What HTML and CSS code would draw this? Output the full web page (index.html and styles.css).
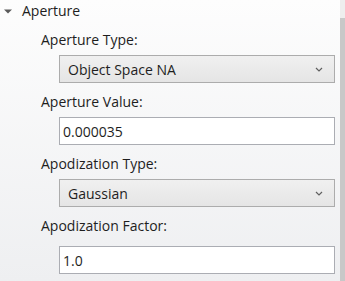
FILE: index.html
```html
<!DOCTYPE html>
<html lang="en">

<head>
    <meta charset="utf-8">
    <meta name="viewport" content="width=device-width, initial-scale=1.0">
    <title>Aperture</title>
    <link rel="stylesheet" href="styles.css">
</head>

<body>

    <div class="wrapper">
        <div class="panel">
            <div class="header">
                <svg class="arrow" width="10" height="5" viewBox="0 0 10 5">
                    <polygon points="1,0.5 9,0.5 5,4.5" fill="#5a5a5a" />
                </svg>
                <span>Aperture</span>
            </div>

            <div class="field first">
                <div class="label">Aperture Type:</div>
                <div class="combo">
                    <span>Object Space NA</span>
                    <svg class="chevron" width="8" height="5" viewBox="0 0 8 5">
                        <polyline points="1,1 4,4 7,1" fill="none" stroke="#606060" stroke-width="1.2" />
                    </svg>
                </div>
            </div>

            <div class="field">
                <div class="label">Aperture Value:</div>
                <div class="textbox">0.000035</div>
            </div>

            <div class="field">
                <div class="label">Apodization Type:</div>
                <div class="combo">
                    <span>Gaussian</span>
                    <svg class="chevron" width="8" height="5" viewBox="0 0 8 5">
                        <polyline points="1,1 4,4 7,1" fill="none" stroke="#606060" stroke-width="1.2" />
                    </svg>
                </div>
            </div>

            <div class="field wide">
                <div class="label">Apodization Factor:</div>
                <div class="textbox">1.0</div>
            </div>

            <div class="field">
                <div class="label">Clear Semi-Diameter Margin Millimeters:</div>
            </div>
        </div>

        <div class="scrollbar">
            <div class="track"></div>
            <div class="thumb"></div>
        </div>
    </div>

</body></html>
```

FILE: styles.css
```css
body {
    margin: 0;
    padding: 0;
    font-family: 'Open Sans', sans-serif;
    color: #1e1e1e;
    overflow: hidden;
}

.wrapper {
    display: flex;
    height: 281px;
    background: linear-gradient(#fdfdfd, #eeeff1);
}

.panel {
    flex: 1;
    padding-right: 5px;
    overflow: hidden;
}

.header {
    display: flex;
    align-items: center;
    height: 20px;
    font-size: 14px;
}

.arrow {
    margin-left: 3px;
    margin-right: 9px;
    margin-top: 2px;
}

.field {
    padding-left: 41px;
    margin-top: 10px;
}

.field.first {
    margin-top: 11px;
}

.label {
    font-size: 14px;
    line-height: 18px;
    white-space: nowrap;
}

.combo {
    display: flex;
    align-items: center;
    justify-content: space-between;
    margin-top: 6px;
    margin-left: 18px;
    height: 26px;
    padding: 0 11px 0 8px;
    border: 1px solid #acacac;
    background: linear-gradient(#f0f0f0, #e5e5e5);
    font-size: 14px;
}

.textbox {
    display: flex;
    align-items: center;
    margin-top: 6px;
    margin-left: 18px;
    height: 26px;
    padding: 0 3px;
    border: 1px solid #abadb3;
    background-color: #ffffff;
    font-size: 14px;
}

.wide .textbox {
    margin-top: 11px;
}

.scrollbar {
    display: flex;
    flex-direction: column;
    width: 5px;
}

.track {
    height: 18px;
    background-color: #eeeeee;
}

.thumb {
    flex: 1;
    background-color: #c8c8c8;
}
```
